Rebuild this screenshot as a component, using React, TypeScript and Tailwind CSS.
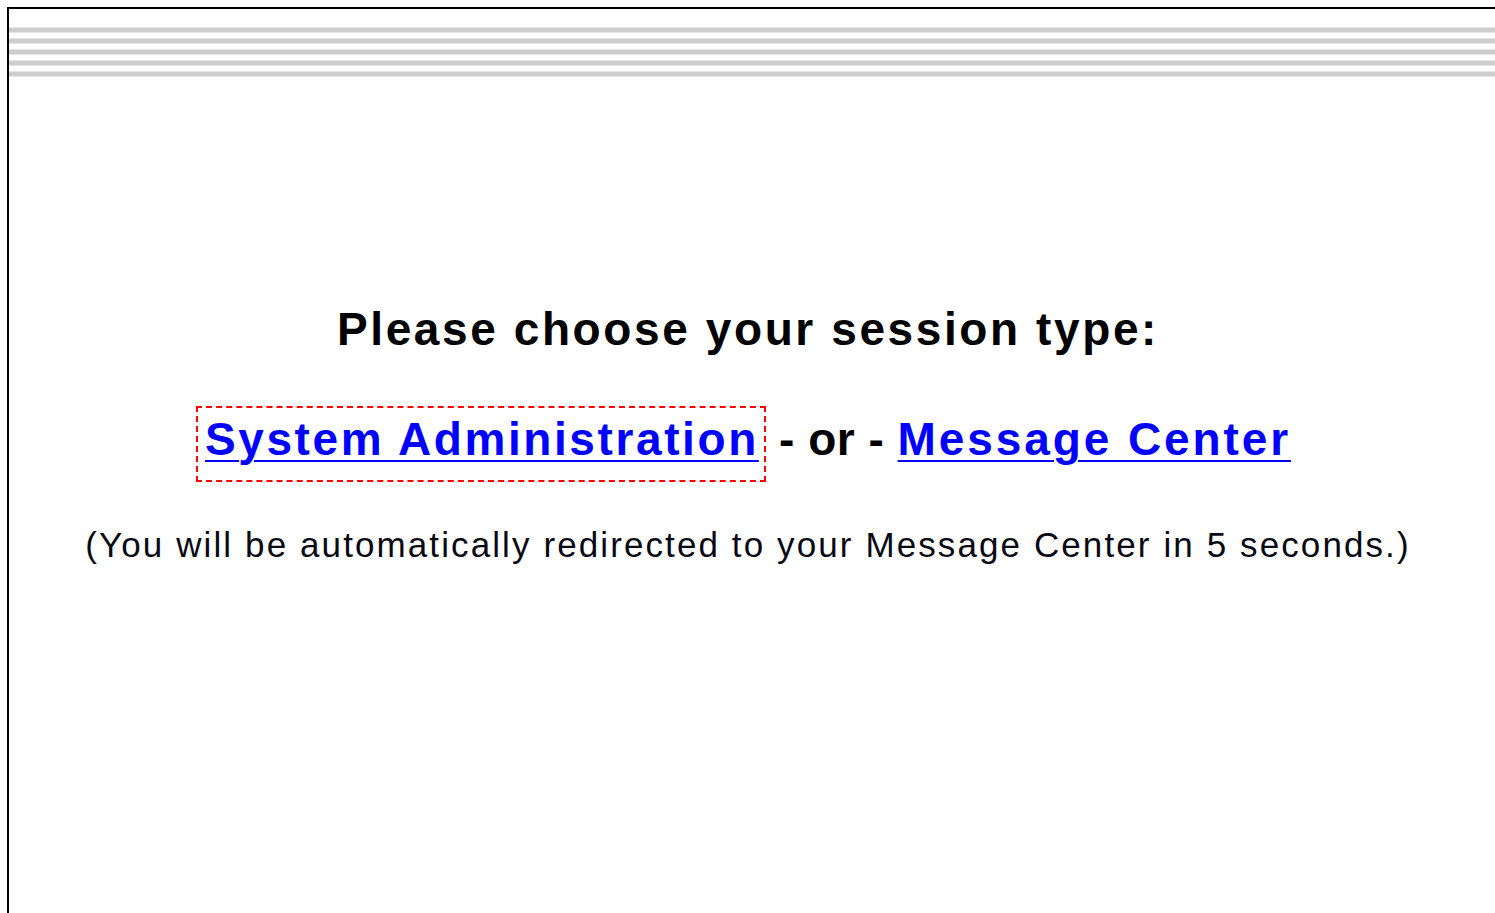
export default function App() {
  const stripes = [0, 1, 2, 3, 4];
  return (
    <div className="min-h-[913px] w-full bg-white" style={{ fontFamily: '"Liberation Sans", Arial, sans-serif' }}>
      <div className="ml-[7px] mt-[7px] min-h-[906px] border-l-2 border-t-2 border-black">
        {/* header rules */}
        <div className="mt-[18px] flex flex-col gap-[5px]">
          {stripes.map((i) => (
            <div key={i} className="h-[6px] border-y border-[#e6e6e6] bg-[#cdcdcd]" />
          ))}
        </div>

        <div className="w-[1478px] text-center">
          <h1 className="mt-[229px] text-[46px] font-bold leading-[46px] tracking-[2.6px] text-black">
            Please choose your session type:
          </h1>

          <div className="mt-[54px] pr-[9px] text-[46px] font-bold leading-[46px] text-black">
            <a
              href="#"
              className="inline-block border-2 border-dashed border-[#f00] pb-[18px] pl-[7px] pr-[5px] pt-[8px] tracking-[2.6px] text-[#0000ff] underline decoration-2 underline-offset-[5px]"
            >
              System Administration
            </a>
            <span className="tracking-[0.5px]"> - or - </span>
            <a href="#" className="tracking-[2.9px] text-[#0000ff] underline decoration-2 underline-offset-[5px]">
              Message Center
            </a>
          </div>

          <p className="mt-[45px] text-[35px] leading-[35px] tracking-[2.1px] text-[#0a0a14]">
            (You will be automatically redirected to your Message Center in 5 seconds.)
          </p>
        </div>
      </div>
    </div>
  );
}
